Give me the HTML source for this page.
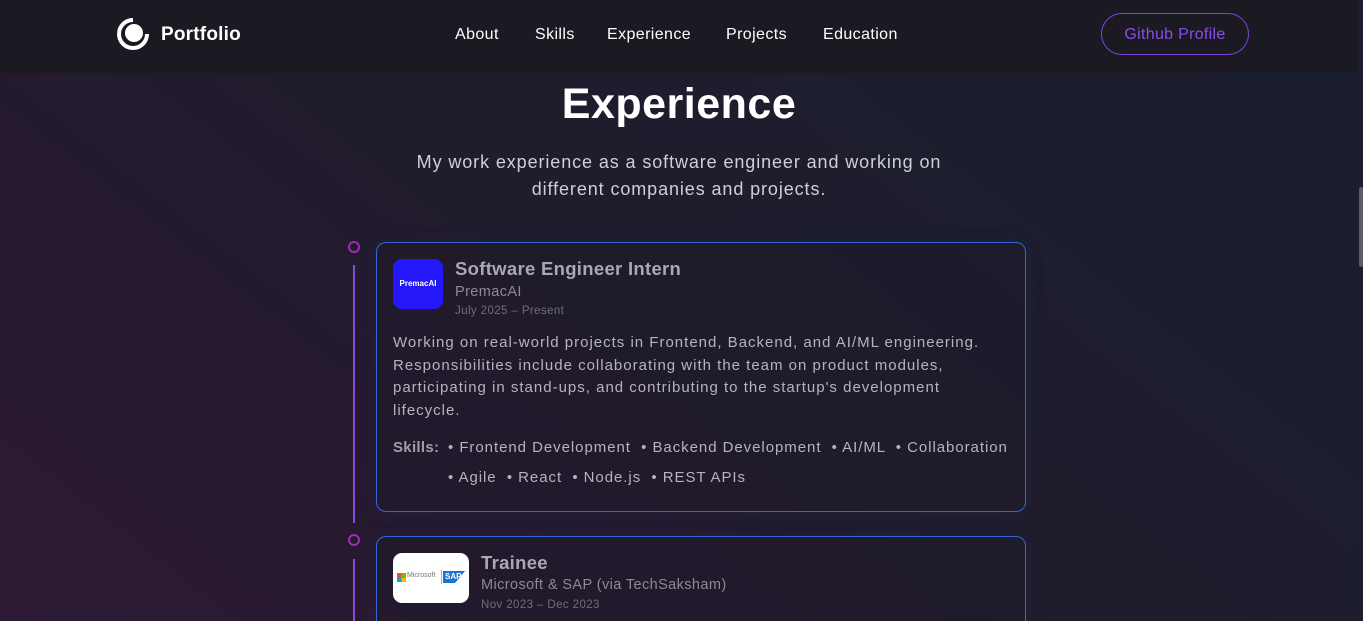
<!DOCTYPE html>
<html><head><meta charset="utf-8"><style>
*{margin:0;padding:0;box-sizing:border-box}
html,body{width:1363px;height:621px;overflow:hidden}
body{font-family:"Liberation Sans",sans-serif;background:linear-gradient(38deg,#2c1a34 0%,#261a2f 25%,#201c2c 50%,#1c1e2e 75%,#1b1e2e 100%);position:relative;color:#fff}
.nav{position:absolute;left:0;top:0;width:1358px;height:73px;background:#1b1a22}
.logo{position:absolute;left:116px;top:17px}
.brand{position:absolute;left:161px;top:24px;font-weight:bold;font-size:19px;letter-spacing:0.2px}
.links{position:absolute;top:26px;font-size:16px;letter-spacing:0.4px;color:#fff}
.btn{position:absolute;left:1101px;top:13px;width:148px;height:42px;border:1.5px solid #8040d8;border-radius:21px;color:#8a4ee8;font-size:16px;text-align:center;line-height:41px;letter-spacing:0.3px}
.scroll{position:absolute;left:1358px;top:0;width:5px;height:621px;background:#1d1e2b}
.thumb{position:absolute;left:1359px;top:187px;width:4px;height:80px;background:#5a5c68;border-radius:2px}
h1{position:absolute;top:80px;width:1358px;text-align:center;font-size:43px;font-weight:bold;letter-spacing:0.5px}
.sub{position:absolute;top:149px;left:0;width:1358px;text-align:center;font-size:18px;line-height:27px;color:#cfcfd6;letter-spacing:0.9px}
.dot{position:absolute;left:348px;width:12px;height:12px;border:2px solid #a02ab8;border-radius:50%}
.line{position:absolute;left:353px;width:2px;background:#8a48e0}
.card{position:absolute;left:376px;width:650px;border:1px solid #3566d6;border-radius:10px;background:rgba(28,26,40,0.35);box-shadow:0 2px 18px rgba(40,60,160,0.15)}
.lg{position:absolute;left:16px;top:16px;border-radius:9px}
.t{position:absolute;font-size:18.5px;font-weight:bold;color:#a9a9b2;letter-spacing:0.3px}
.c{position:absolute;font-size:14.5px;color:#8b8b94;letter-spacing:0.4px}
.d{position:absolute;font-size:11.5px;color:#6f6f78;letter-spacing:0.4px}
.desc{position:absolute;left:16px;top:89px;width:605px;font-size:15px;line-height:22.7px;color:#b4b4be;letter-spacing:1px}
.sk{position:absolute;left:16px;top:190px;font-size:15px;color:#b4b4be;letter-spacing:0.95px;line-height:30px}
.sk b{color:#9e9ea8;position:absolute;left:0;top:0;letter-spacing:0.3px}
</style></head><body>
<div class="nav">
<svg class="logo" width="34" height="34" viewBox="0 0 34 34"><path d="M17 3 A14 14 0 1 0 31 17" fill="none" stroke="#fff" stroke-width="4"/><circle cx="18" cy="16" r="9" fill="#fff"/></svg>
<div class="brand">Portfolio</div>
<div class="links" style="left:455px">About</div>
<div class="links" style="left:535px">Skills</div>
<div class="links" style="left:607px">Experience</div>
<div class="links" style="left:726px">Projects</div>
<div class="links" style="left:823px">Education</div>
<div class="btn">Github Profile</div>
</div>
<div class="scroll"></div><div class="thumb"></div>
<h1>Experience</h1>
<div class="sub">My work experience as a software engineer and working on<br>different companies and projects.</div>
<div class="dot" style="top:241px"></div>
<div class="line" style="top:265px;height:258px"></div>
<div class="dot" style="top:534px"></div>
<div class="line" style="top:559px;height:62px"></div>
<div class="card" style="top:242px;height:270px">
<div class="lg" style="width:50px;height:50px;background:#2418fa;color:#fff;font-size:8px;font-weight:bold;text-align:center;line-height:50px">PremacAI</div>
<div class="t" style="left:78px;top:15px">Software Engineer Intern</div>
<div class="c" style="left:78px;top:41px">PremacAI</div>
<div class="d" style="left:78px;top:62px">July 2025 – Present</div>
<div class="desc">Working on real-world projects in Frontend, Backend, and AI/ML engineering. Responsibilities include collaborating with the team on product modules, participating in stand-ups, and contributing to the startup's development lifecycle.</div>
<div class="sk"><b>Skills:</b><div style="margin-left:55px;width:600px">• Frontend Development &nbsp;• Backend Development &nbsp;• AI/ML &nbsp;• Collaboration<br>• Agile &nbsp;• React &nbsp;• Node.js &nbsp;• REST APIs</div></div>
</div>
<div class="card" style="top:536px;height:100px">
<div class="lg" style="width:76px;height:50px;background:#fff">
<div style="position:absolute;left:4px;top:20px;width:9px;height:9px;background:linear-gradient(90deg,#f25022 50%,#7fba00 50%)"></div>
<div style="position:absolute;left:4px;top:24.5px;width:9px;height:4.5px;background:linear-gradient(90deg,#00a4ef 50%,#ffb900 50%)"></div>
<div style="position:absolute;left:14px;top:19px;font-size:7px;color:#777">Microsoft</div>
<div style="position:absolute;left:48px;top:17px;width:1px;height:14px;background:#aaa"></div>
<div style="position:absolute;left:50px;top:18px;width:22px;height:12px;background:#1a73d0;color:#fff;font-size:8px;font-weight:bold;line-height:12px;padding-left:2px;clip-path:polygon(0 0,100% 0,55% 100%,0 100%)">SAP</div>
</div>
<div class="t" style="left:104px;top:15px">Trainee</div>
<div class="c" style="left:104px;top:40px">Microsoft &amp; SAP (via TechSaksham)</div>
<div class="d" style="left:104px;top:62px">Nov 2023 – Dec 2023</div>
</div>
</body></html>
